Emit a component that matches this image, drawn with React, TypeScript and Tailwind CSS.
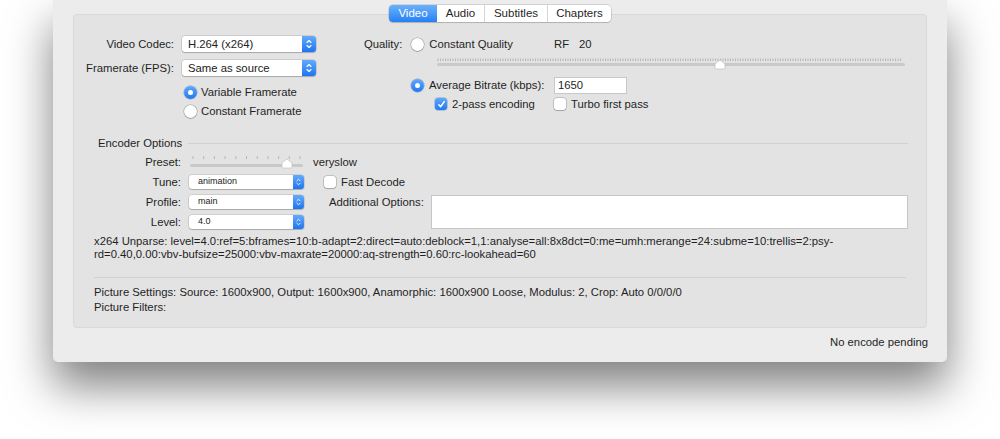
import React from 'react';

const Chevrons = ({ small }: { small?: boolean }) => (
  <svg width={small ? 5 : 6} height={small ? 8 : 10} viewBox="0 0 6 10" fill="none">
    <path d="M1 3.5 L3 1.5 L5 3.5" stroke="white" strokeWidth="1.1" strokeLinecap="round" strokeLinejoin="round" />
    <path d="M1 6.5 L3 8.5 L5 6.5" stroke="white" strokeWidth="1.1" strokeLinecap="round" strokeLinejoin="round" />
  </svg>
);

const PopUp = ({ value, small }: { value: string; small?: boolean }) => (
  <div
    className={`flex ${
      small ? 'h-[14px] w-[115px] text-[9px]' : 'h-[16px] w-[134px] text-[11.3px]'
    } rounded-[3px] bg-white shadow-[0_0_0_0.5px_rgba(0,0,0,0.18),0_1px_1px_rgba(0,0,0,0.18)]`}
  >
    <span className={`flex-1 flex items-center ${small ? 'pl-[9px]' : 'pl-[6px]'} text-[#222]`}>{value}</span>
    <span
      className={`${
        small ? 'w-[11px]' : 'w-[14px]'
      } rounded-r-[3px] bg-linear-to-b from-[#62aafb] to-[#1c74f0] flex items-center justify-center`}
    >
      <Chevrons small={small} />
    </span>
  </div>
);

const Radio = ({ checked }: { checked?: boolean }) =>
  checked ? (
    <span className="shrink-0 w-[13px] h-[13px] rounded-full bg-linear-to-b from-[#5ea8fb] to-[#1f78f2] flex items-center justify-center shadow-[0_0_0_0.5px_rgba(0,60,160,0.4)]">
      <span className="block w-[5px] h-[5px] rounded-full bg-white" />
    </span>
  ) : (
    <span className="shrink-0 block w-[13px] h-[13px] rounded-full bg-white shadow-[0_0_0_0.5px_rgba(0,0,0,0.3),0_1px_1px_rgba(0,0,0,0.15)]" />
  );

const Checkbox = ({ checked }: { checked?: boolean }) =>
  checked ? (
    <span className="shrink-0 w-[12px] h-[12px] rounded-[3px] bg-linear-to-b from-[#5ea8fb] to-[#1f78f2] flex items-center justify-center shadow-[0_0_0_0.5px_rgba(0,60,160,0.4)]">
      <svg width="9" height="9" viewBox="0 0 9 9" fill="none">
        <path d="M1.8 4.8 L3.6 6.8 L7.2 1.6" stroke="white" strokeWidth="1.5" strokeLinecap="round" strokeLinejoin="round" />
      </svg>
    </span>
  ) : (
    <span className="shrink-0 block w-[12px] h-[12px] rounded-[3px] bg-white shadow-[0_0_0_0.5px_rgba(0,0,0,0.3),0_1px_1px_rgba(0,0,0,0.15)]" />
  );

const Knob = ({ x, y }: { x: number; y: number }) => (
  <path
    d={`M${x - 5} ${y + 4} L${x} ${y} L${x + 5} ${y + 4} L${x + 5} ${y + 8} Q${x + 5} ${y + 9} ${x + 4} ${y + 9} L${x - 4} ${y + 9} Q${x - 5} ${y + 9} ${x - 5} ${y + 8} Z`}
    fill="white"
    stroke="#b8b8b8"
    strokeWidth="0.6"
  />
);

const QualitySlider = () => {
  const ticks: number[] = [];
  for (let x = 1; x < 466; x += 2.5) ticks.push(x);
  return (
    <svg width="468" height="12" className="block">
      {ticks.map((x, i) => (
        <line key={i} x1={x} x2={x} y1={0.5} y2={3} stroke="#a9a9a9" strokeWidth="0.8" />
      ))}
      <rect x="0" y="5" width="468" height="3" rx="1.5" fill="#c9c9c9" />
      <Knob x={283} y={2} />
    </svg>
  );
};

const PresetSlider = () => {
  const ticks: number[] = [];
  for (let i = 0; i < 11; i++) ticks.push(3 + i * 10.7);
  return (
    <svg width="113" height="14" className="block">
      {ticks.map((x, i) => (
        <line key={i} x1={x} x2={x} y1={1} y2={4} stroke="#a9a9a9" strokeWidth="0.8" />
      ))}
      <rect x="0" y="9" width="113" height="3" rx="1.5" fill="#c9c9c9" />
      <Knob x={97} y={4} />
    </svg>
  );
};

const tabs = ['Video', 'Audio', 'Subtitles', 'Chapters'];
const tabWidths = ['w-[48px]', 'w-[47px]', 'w-[63px]', 'w-[64px]'];

export default function App() {
  return (
    <div className="w-[1000px] h-[439px] bg-white overflow-hidden font-['Liberation_Sans',Arial,sans-serif] text-[#1f1f1f]">
      <div className="ml-[53px] w-[894px] h-[362px] bg-[#ececec] rounded-b-[5px] shadow-[0_24px_45px_rgba(0,0,0,0.5)] flex flex-col">
        {/* Tabs */}
        <div className="mt-[5px] h-[17px] self-center flex relative z-10 rounded-[4px] bg-white shadow-[0_0_0_0.5px_rgba(0,0,0,0.22),0_1px_1px_rgba(0,0,0,0.12)] text-[11.5px]">
          {tabs.map((t, i) => (
            <div
              key={t}
              className={`${tabWidths[i]} flex items-center justify-center ${
                i === 0
                  ? 'bg-linear-to-b from-[#69b1fb] to-[#2580f4] text-white rounded-l-[4px]'
                  : 'border-l border-[#d6d6d6] text-[#1f1f1f]'
              } ${i === 1 ? 'border-l-0' : ''}`}
            >
              {t}
            </div>
          ))}
        </div>

        {/* Group box */}
        <div className="mx-[20px] mt-[-8px] h-[314px] bg-[#e3e3e3] border border-[#d8d8d8] rounded-[4px] text-[11.3px] flex flex-col">
          {/* Top section */}
          <div className="flex pt-[21px]">
            <div className="w-[290px] flex flex-col">
              <div className="flex items-center h-[16px]">
                <span className="w-[100px] text-right whitespace-nowrap">Video Codec:</span>
                <span className="ml-[8px]">
                  <PopUp value="H.264 (x264)" />
                </span>
              </div>
              <div className="flex items-center h-[16px] mt-[8px]">
                <span className="w-[100px] text-right whitespace-nowrap">Framerate (FPS):</span>
                <span className="ml-[8px]">
                  <PopUp value="Same as source" />
                </span>
              </div>
              <div className="ml-[110px] mt-[9px] flex flex-col gap-[5px]">
                <div className="flex items-center h-[14px]">
                  <Radio checked />
                  <span className="ml-[4px]">Variable Framerate</span>
                </div>
                <div className="flex items-center h-[14px]">
                  <Radio />
                  <span className="ml-[4px]">Constant Framerate</span>
                </div>
              </div>
            </div>

            <div className="flex flex-col">
              <div className="flex items-center h-[16px]">
                <div className="w-[190px] flex items-center">
                  <span>Quality:</span>
                  <span className="ml-[9px]">
                    <Radio />
                  </span>
                  <span className="ml-[5px]">Constant Quality</span>
                </div>
                <span>RF</span>
                <span className="ml-[10px]">20</span>
              </div>
              <div className="ml-[73px] mt-[6px]">
                <QualitySlider />
              </div>
              <div className="flex items-center h-[17px] mt-[7px]">
                <div className="w-[190px] flex items-center pl-[47px]">
                  <Radio checked />
                  <span className="ml-[5px]">Average Bitrate (kbps):</span>
                </div>
                <div className="w-[73px] h-[17px] bg-white border border-[#c8c8c8] flex items-center pl-[3px]">
                  1650
                </div>
              </div>
              <div className="flex items-center h-[14px] mt-[3px]">
                <div className="w-[190px] flex items-center pl-[71px]">
                  <Checkbox checked />
                  <span className="ml-[5px]">2-pass encoding</span>
                </div>
                <Checkbox />
                <span className="ml-[5px]">Turbo first pass</span>
              </div>
            </div>
          </div>

          {/* Encoder Options */}
          <div className="flex items-center h-[14px] mt-[18px] pl-[24px] mr-[18px]">
            <span>Encoder Options</span>
            <span className="flex-1 ml-[6px] h-px bg-[#d0d0d0]" />
          </div>
          <div className="flex items-center h-[14px] mt-[5px]">
            <span className="w-[107px] text-right">Preset:</span>
            <span className="ml-[9px]">
              <PresetSlider />
            </span>
            <span className="ml-[10px]">veryslow</span>
          </div>
          <div className="flex mt-[6px]">
            <div className="flex flex-col gap-[6px]">
              {[
                ['Tune:', 'animation'],
                ['Profile:', 'main'],
                ['Level:', '4.0'],
              ].map(([label, value]) => (
                <div key={label} className="flex items-center h-[14px]">
                  <span className="w-[107px] text-right">{label}</span>
                  <span className="ml-[8px]">
                    <PopUp value={value} small />
                  </span>
                </div>
              ))}
            </div>
            <div className="ml-[20px] flex flex-col">
              <div className="flex items-center h-[14px]">
                <Checkbox />
                <span className="ml-[5px]">Fast Decode</span>
              </div>
              <div className="flex items-start mt-[6px]">
                <span className="ml-[5px] w-[102px] h-[14px] flex items-center whitespace-nowrap">Additional Options:</span>
                <div className="w-[477px] h-[34px] bg-white border border-[#c6c6c6]" />
              </div>
            </div>
          </div>

          {/* x264 unparse */}
          <div className="mt-[6px] pl-[20px] leading-[13px] whitespace-nowrap">
            <div>
              x264 Unparse: level=4.0:ref=5:bframes=10:b-adapt=2:direct=auto:deblock=1,1:analyse=all:8x8dct=0:me=umh:merange=24:subme=10:trellis=2:psy-
            </div>
            <div>rd=0.40,0.00:vbv-bufsize=25000:vbv-maxrate=20000:aq-strength=0.60:rc-lookahead=60</div>
          </div>

          <div className="mt-[16px] mx-[20px] h-px bg-[#d0d0d0]" />

          <div className="mt-[7px] pl-[20px] leading-[15px]">
            <div>Picture Settings: Source: 1600x900, Output: 1600x900, Anamorphic: 1600x900 Loose, Modulus: 2, Crop: Auto 0/0/0/0</div>
            <div>Picture Filters:</div>
          </div>
        </div>

        <div className="mt-[7px] pr-[19px] text-right text-[11.3px] leading-[14px]">No encode pending</div>
      </div>
    </div>
  );
}
